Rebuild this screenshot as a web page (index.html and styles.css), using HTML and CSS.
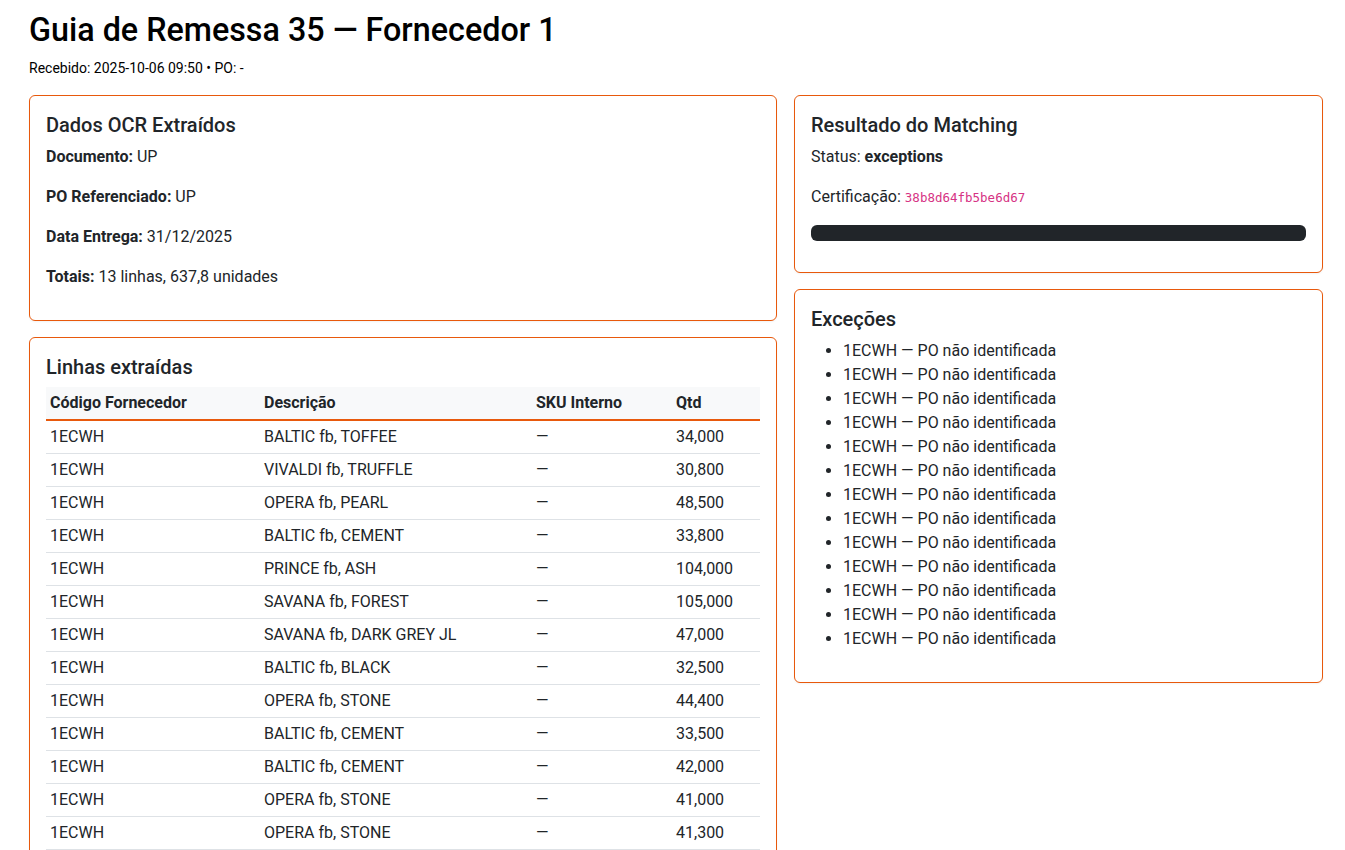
FILE: index.html
```html
<!DOCTYPE html>
<html lang="pt">
<head>
<meta charset="utf-8">
<title>Guia de Remessa 35</title>
<link rel="stylesheet" href="styles.css">
</head>
<body>
<main class="page">
  <h1 class="title">Guia de Remessa 35 — Fornecedor 1</h1>
  <p class="subtitle">Recebido: 2025-10-06 09:50 • PO: -</p>
  <div class="layout">
    <div class="col">
      <section class="card">
        <h5 class="card-title">Dados OCR Extraídos</h5>
        <p><strong>Documento:</strong> UP</p>
        <p><strong>PO Referenciado:</strong> UP</p>
        <p><strong>Data Entrega:</strong> 31/12/2025</p>
        <p><strong>Totais:</strong> 13 linhas, 637,8 unidades</p>
      </section>
      <section class="card">
        <h5 class="card-title">Linhas extraídas</h5>
        <table class="lines">
          <colgroup><col class="c1"><col class="c2"><col class="c3"><col class="c4"></colgroup>
          <thead>
            <tr><th>Código Fornecedor</th><th>Descrição</th><th>SKU Interno</th><th>Qtd</th></tr>
          </thead>
          <tbody>
            <tr><td>1ECWH</td><td>BALTIC fb, TOFFEE</td><td>—</td><td>34,000</td></tr>
            <tr><td>1ECWH</td><td>VIVALDI fb, TRUFFLE</td><td>—</td><td>30,800</td></tr>
            <tr><td>1ECWH</td><td>OPERA fb, PEARL</td><td>—</td><td>48,500</td></tr>
            <tr><td>1ECWH</td><td>BALTIC fb, CEMENT</td><td>—</td><td>33,800</td></tr>
            <tr><td>1ECWH</td><td>PRINCE fb, ASH</td><td>—</td><td>104,000</td></tr>
            <tr><td>1ECWH</td><td>SAVANA fb, FOREST</td><td>—</td><td>105,000</td></tr>
            <tr><td>1ECWH</td><td>SAVANA fb, DARK GREY JL</td><td>—</td><td>47,000</td></tr>
            <tr><td>1ECWH</td><td>BALTIC fb, BLACK</td><td>—</td><td>32,500</td></tr>
            <tr><td>1ECWH</td><td>OPERA fb, STONE</td><td>—</td><td>44,400</td></tr>
            <tr><td>1ECWH</td><td>BALTIC fb, CEMENT</td><td>—</td><td>33,500</td></tr>
            <tr><td>1ECWH</td><td>BALTIC fb, CEMENT</td><td>—</td><td>42,000</td></tr>
            <tr><td>1ECWH</td><td>OPERA fb, STONE</td><td>—</td><td>41,000</td></tr>
            <tr><td>1ECWH</td><td>OPERA fb, STONE</td><td>—</td><td>41,300</td></tr>
          </tbody>
        </table>
      </section>
    </div>
    <div class="col">
      <section class="card">
        <h5 class="card-title">Resultado do Matching</h5>
        <p>Status: <strong>exceptions</strong></p>
        <p>Certificação: <code>38b8d64fb5be6d67</code></p>
        <div class="progress"><div class="progress-bar"></div></div>
      </section>
      <section class="card">
        <h5 class="card-title">Exceções</h5>
        <ul class="exceptions">
          <li>1ECWH — PO não identificada</li>
          <li>1ECWH — PO não identificada</li>
          <li>1ECWH — PO não identificada</li>
          <li>1ECWH — PO não identificada</li>
          <li>1ECWH — PO não identificada</li>
          <li>1ECWH — PO não identificada</li>
          <li>1ECWH — PO não identificada</li>
          <li>1ECWH — PO não identificada</li>
          <li>1ECWH — PO não identificada</li>
          <li>1ECWH — PO não identificada</li>
          <li>1ECWH — PO não identificada</li>
          <li>1ECWH — PO não identificada</li>
          <li>1ECWH — PO não identificada</li>
        </ul>
      </section>
    </div>
  </div>
</main>
</body>
</html>
```
FILE: styles.css
```css
* { box-sizing: border-box; }
html, body { margin: 0; padding: 0; background: #fff; }
body {
  font-family: Roboto, "Noto Sans", "Liberation Sans", sans-serif;
  font-size: 16px;
  line-height: 1.5;
  color: #212529;
}
.page { padding: 11px 22px 0 29px; }
.title {
  font-size: 32.3px;
  font-weight: 500;
  line-height: 1.2;
  margin: 0 0 8px 0;
  color: #000;
}
.subtitle {
  font-size: 14px;
  margin: 0 0 16px 0;
  color: #000;
}
.layout {
  display: grid;
  grid-template-columns: 748px 529px;
  column-gap: 17px;
  align-items: start;
}
.col { display: flex; flex-direction: column; gap: 16px; }
.card {
  border: 1px solid #e8590c;
  border-radius: 6px;
  padding: 17px 16px 15px 16px;
  background: #fff;
  box-shadow: 0 1px 2px rgba(0,0,0,0.05);
}
.card-title {
  font-size: 20px;
  font-weight: 500;
  line-height: 1.2;
  margin: 0 0 8px 0;
}
.card p { margin: 0 0 16px 0; }
strong { font-weight: 700; }
code {
  font-family: "DejaVu Sans Mono", "Liberation Mono", monospace;
  font-size: 12.5px;
  color: #d63384;
}
.progress {
  height: 16px;
  border-radius: 6px;
  background: #e9ecef;
  overflow: hidden;
  margin-bottom: 16px;
}
.progress-bar { height: 100%; width: 100%; background: #212529; }
.lines {
  width: 100%;
  border-collapse: collapse;
  table-layout: fixed;
  margin-bottom: 0;
}
.lines .c1 { width: 214px; }
.lines .c2 { width: 272px; }
.lines .c3 { width: 140px; }
.lines .c4 { width: auto; }
.lines th, .lines td {
  text-align: left;
  padding: 4px;
  line-height: 24px;
  white-space: nowrap;
}
.lines th {
  font-weight: 700;
  background: #f8f9fa;
  border-bottom: 2px solid #e8590c;
}
.lines td { border-bottom: 1px solid #dee2e6; }
.exceptions { margin: 0 0 16px 0; padding-left: 32px; }
.exceptions li { line-height: 24px; }
```
